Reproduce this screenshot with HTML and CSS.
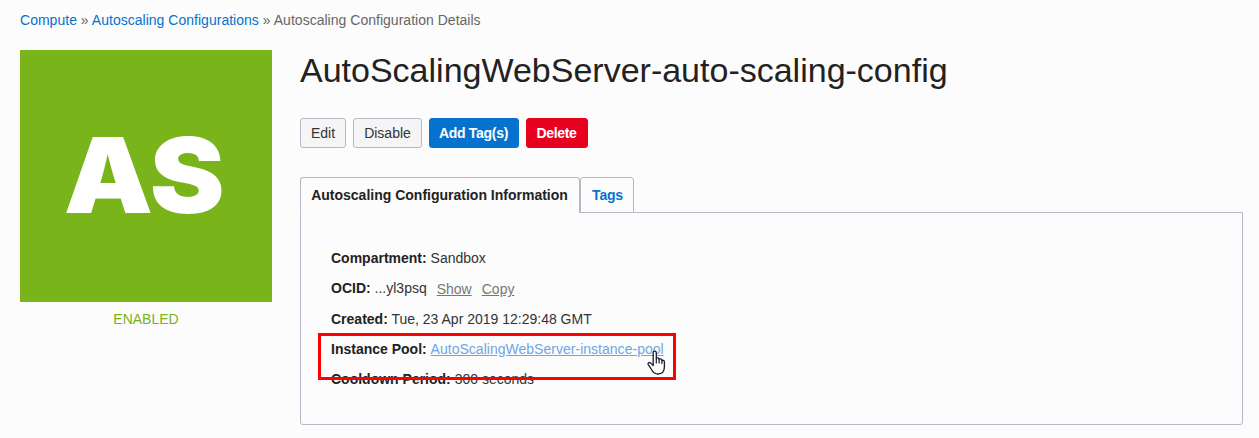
FILE: index.html
```html
<!DOCTYPE html>
<html lang="en">
<head>
<meta charset="utf-8">
<title>Autoscaling Configuration Details</title>
<link rel="stylesheet" href="styles.css">
</head>
<body>
<nav class="breadcrumb"><a href="#">Compute</a> » <a href="#">Autoscaling Configurations</a> » <span>Autoscaling Configuration Details</span></nav>
<div class="layout">
  <aside class="resource">
    <div class="tile"><span class="initials">AS</span></div>
    <div class="status">ENABLED</div>
  </aside>
  <main class="details">
    <h1 class="title">AutoScalingWebServer-auto-scaling-config</h1>
    <div class="actions">
      <button class="btn btn-edit">Edit</button>
      <button class="btn btn-disable">Disable</button>
      <button class="btn btn-primary">Add Tag(s)</button>
      <button class="btn btn-danger">Delete</button>
    </div>
    <div class="tabs">
      <div class="tab tab-active">Autoscaling Configuration Information</div>
      <div class="tab tab-link">Tags</div>
    </div>
    <section class="panel">
      <div class="row"><b>Compartment:</b> <span>Sandbox</span></div>
      <div class="row"><b>OCID:</b> <span>...yl3psq</span><a class="mini" href="#">Show</a><a class="mini" href="#">Copy</a></div>
      <div class="row"><b>Created:</b> <span>Tue, 23 Apr 2019 12:29:48 GMT</span></div>
      <div class="row"><b>Instance Pool:</b> <a class="pool" href="#">AutoScalingWebServer-instance-pool</a></div>
      <div class="row"><b>Cooldown Period:</b> <span>300 seconds</span></div>
      <div class="highlight"></div>
      <svg class="pointer" width="20" height="26" viewBox="0 0 20 26"><path d="M6.2 15.5V2.8c0-2.3 3.1-2.3 3.1 0v6c.4-1.5 2.8-1.3 2.8.4v.5c.5-1.3 2.8-1 2.8.6v.5c.7-1 2.5-.6 2.5 1v5c0 4.3-2.4 7.2-6.5 7.2-3.2 0-4.7-1.4-6.1-4L1.3 14.6c-.9-1.7.9-2.7 2.2-1.7l2.7 2.6z" fill="#fff" stroke="#1c1c2c" stroke-width="1.3" stroke-linejoin="round"/><path d="M9.3 8.6v4.9M12.1 9.6v3.9M14.9 10.6v3.4" fill="none" stroke="#1c1c2c" stroke-width="1.2"/></svg>
    </section>
  </main>
</div>
</body>
</html>
```
FILE: styles.css
```css
* { box-sizing: border-box; }
body {
  margin: 0;
  height: 438px;
  overflow: hidden;
  background: #fcfcfc;
  color: #222;
  font: 14px/20px "Liberation Sans", Arial, sans-serif;
}
a { color: #0572ce; text-decoration: none; }
.breadcrumb { padding: 10px 20px 0; height: 50px; color: #666; letter-spacing: 0.02px; }
.layout { display: flex; gap: 28px; padding: 0 16px 0 20px; }
.resource { width: 252px; flex: none; }
.tile {
  height: 252px;
  padding: 0 3px 3px 0;
  background: #78b41a;
  display: flex;
  align-items: center;
  justify-content: center;
}
.initials {
  color: #fff;
  font: 900 105px/1 Inter, "Liberation Sans", sans-serif;
  transform: scaleX(1.07);
}
.status { margin-top: 7px; text-align: center; color: #78b41a; }
.details { flex: 1; min-width: 0; }
.title { margin: 0; height: 68px; font-size: 34px; line-height: 41px; font-weight: 400; white-space: nowrap; }
.actions { display: flex; gap: 7px; margin-bottom: 29px; }
.btn {
  height: 30px;
  padding: 0;
  border: 1px solid #b3b9c5;
  border-radius: 3px;
  background: #f5f5f5;
  color: #333;
  font: 14px/20px "Liberation Sans", Arial, sans-serif;
}
.btn-edit { width: 46px; }
.btn-disable { width: 69px; }
.btn-primary { width: 90px; padding-right: 1px; background: #0572ce; border-color: #0572ce; color: #fff; font-weight: 700; letter-spacing: -0.3px; }
.btn-danger { width: 62px; padding-right: 1px; background: #e8001f; border-color: #e8001f; color: #fff; font-weight: 700; letter-spacing: -0.3px; }
.tabs { display: flex; height: 36px; }
.tab {
  height: 36px;
  padding-top: 7px;
  border: 1px solid #b3b9c5;
  border-radius: 3px 3px 0 0;
  background: #fcfcfc;
  font-weight: 700;
  text-align: center;
  white-space: nowrap;
  z-index: 1;
}
.tab-active { width: 280px; padding-right: 1px; border-bottom-color: #fcfcfc; }
.tab-link { width: 54px; padding-left: 1px; color: #0572ce; letter-spacing: -0.2px; }
.panel {
  position: relative;
  height: 213px;
  margin-top: -1px;
  padding: 35px 30px 0;
  border: 1px solid #b3b9c5;
  border-radius: 0 0 3px 3px;
}
.row { height: 30.3px; white-space: nowrap; }
.row span { color: #333; }
.mini { margin-left: 10px; color: #777; text-decoration: underline; position: relative; top: 1px; }
.pool { color: #6ea6e6; text-decoration: underline; letter-spacing: 0.02px; }
.highlight { position: absolute; left: 17px; top: 120px; width: 358px; height: 47px; border: 3px solid #f00; }
.pointer { position: absolute; left: 346px; top: 137px; }
```
